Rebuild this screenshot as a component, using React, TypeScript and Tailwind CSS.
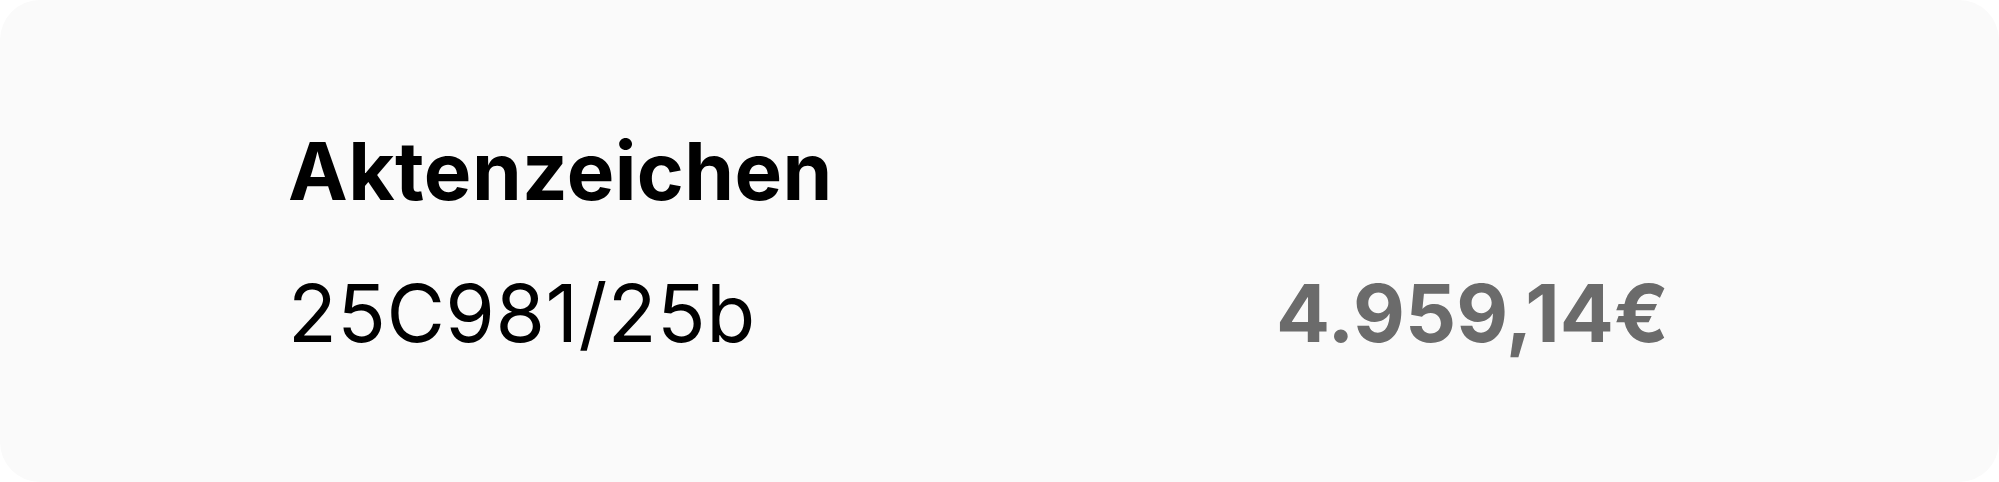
export default function App() {
  return (
    <div className="h-[482px] w-full bg-white font-['Inter','Liberation_Sans',sans-serif]">
      <div className="flex h-full flex-col rounded-[40px] bg-[#fafafa] pl-[288px] pt-[123px]">
        <div className="grid grid-cols-[988px_auto] gap-y-[46px]">
          <h2 className="text-[80px] font-bold leading-[96px] tracking-[0.4px] text-black">
            Aktenzeichen
          </h2>
          <div />
          <p className="text-[80px] font-normal leading-[96px] tracking-[0.5px] text-black">
            25C981/25b
          </p>
          <p className="text-[80px] font-bold leading-[96px] text-[#6b6b6b]">
            4.959,14€
          </p>
        </div>
      </div>
    </div>
  )
}
